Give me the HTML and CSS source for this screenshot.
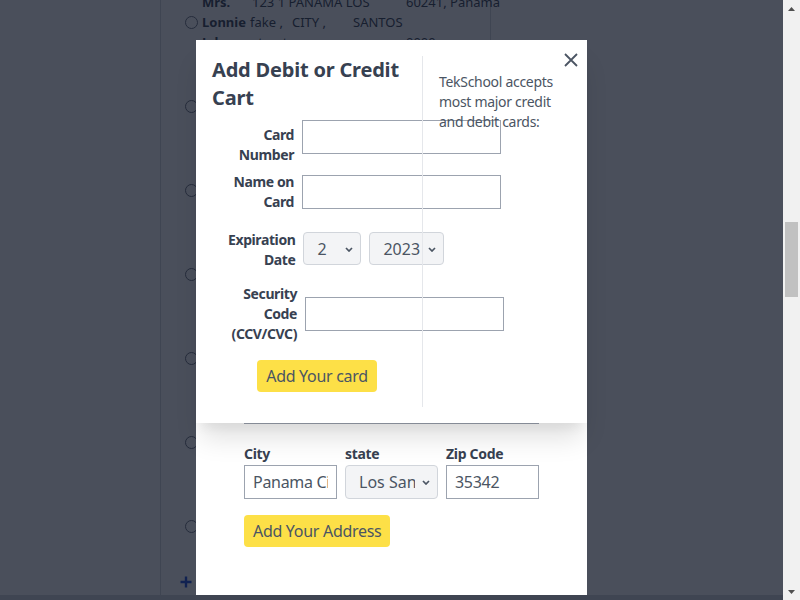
FILE: index.html
```html
<!DOCTYPE html>
<html lang="en">
<head>
<meta charset="utf-8">
<title>Add Debit or Credit Cart</title>
<link rel="stylesheet" href="styles.css">
</head>
<body>
<div class="screen">
  <main class="viewport">
    <div class="page">
      <section class="panel">
        <div class="addr-list">
          <label class="addr">
            <span class="radio"></span>
            <span class="addr-text">
              <span class="addr-line"><b class="a-name">Mrs.</b><span class="a-street">123 1 PANAMA LOS</span><span>60241, Panama</span></span>
              <span class="addr-line"><b class="a-name">Lonnie</b><span class="a-fake">fake ,</span><span class="a-city">CITY ,</span><span>SANTOS</span></span>
              <span class="addr-line"><b class="a-name">Johnson</b><span class="a-street">street</span><span>0000</span></span>
            </span>
          </label>
          <label class="addr">
            <span class="radio"></span>
            <span class="addr-text">
              <span class="addr-line"><b class="a-name">Mr.</b><span class="a-street">45 MAIN STREET</span><span>22031, Panama</span></span>
              <span class="addr-line"><b class="a-name">Mark</b><span class="a-fake">apt ,</span><span class="a-city">CITY ,</span><span>SANTOS</span></span>
              <span class="addr-line"><b class="a-name">Smith</b></span>
            </span>
          </label>
          <label class="addr">
            <span class="radio"></span>
            <span class="addr-text">
              <span class="addr-line"><b class="a-name">Ms.</b><span class="a-street">9 OCEAN AVE</span><span>10023, Panama</span></span>
              <span class="addr-line"><b class="a-name">Sara</b><span class="a-fake">unit ,</span><span class="a-city">CITY ,</span><span>COLON</span></span>
              <span class="addr-line"><b class="a-name">Lee</b></span>
            </span>
          </label>
          <label class="addr">
            <span class="radio"></span>
            <span class="addr-text">
              <span class="addr-line"><b class="a-name">Mr.</b><span class="a-street">77 PARK ROAD</span><span>30012, Panama</span></span>
              <span class="addr-line"><b class="a-name">John</b><span class="a-fake">fake ,</span><span class="a-city">CITY ,</span><span>SANTOS</span></span>
              <span class="addr-line"><b class="a-name">Doe</b></span>
            </span>
          </label>
          <label class="addr">
            <span class="radio"></span>
            <span class="addr-text">
              <span class="addr-line"><b class="a-name">Mrs.</b><span class="a-street">12 HILL STREET</span><span>40110, Panama</span></span>
              <span class="addr-line"><b class="a-name">Anna</b><span class="a-fake">fake ,</span><span class="a-city">CITY ,</span><span>HERRERA</span></span>
              <span class="addr-line"><b class="a-name">Brown</b></span>
            </span>
          </label>
          <label class="addr">
            <span class="radio"></span>
            <span class="addr-text">
              <span class="addr-line"><b class="a-name">Mr.</b><span class="a-street">3 RIVER LANE</span><span>50220, Panama</span></span>
              <span class="addr-line"><b class="a-name">Paul</b><span class="a-fake">fake ,</span><span class="a-city">CITY ,</span><span>SANTOS</span></span>
              <span class="addr-line"><b class="a-name">Green</b></span>
            </span>
          </label>
          <label class="addr">
            <span class="radio"></span>
            <span class="addr-text">
              <span class="addr-line"><b class="a-name">Ms.</b><span class="a-street">8 LAKE DRIVE</span><span>60330, Panama</span></span>
              <span class="addr-line"><b class="a-name">Kim</b><span class="a-fake">fake ,</span><span class="a-city">CITY ,</span><span>SANTOS</span></span>
              <span class="addr-line"><b class="a-name">White</b></span>
            </span>
          </label>
        </div>
        <a class="add-new" href="#">
          <svg class="plus" width="12" height="12" viewBox="0 0 12 12" aria-hidden="true"><path d="M6 0.5V11.5M0.5 6H11.5" stroke="currentColor" stroke-width="2.4" fill="none"/></svg>
          <span>Add a new address</span>
        </a>
      </section>
    </div>
    <div class="page-foot"></div>

    <div class="overlay"></div>

    <div class="modal modal-back">
      <h2 class="back-title">Add an Address</h2>
      <div class="bfield"><span class="blabel">Country</span><input class="binput" value="Panama"></div>
      <div class="bfield"><span class="blabel">Full Name</span><input class="binput" value="Lonnie Johnson"></div>
      <div class="bfield"><span class="blabel">Phone Number</span><input class="binput" value="5555555555"></div>
      <div class="bfield"><span class="blabel">Street Address</span><input class="binput" value="123 1 PANAMA LOS"></div>
      <div class="bgrid">
        <div class="gcell"><span class="blabel">City</span><input class="binput" value="Panama City"></div>
        <div class="gcell"><span class="blabel">state</span>
          <span class="sel-wrap sel-full">
            <select class="sel"><option>Los Santos</option></select>
            <svg class="chev" width="8" height="5" viewBox="0 0 8 5" aria-hidden="true"><path d="M1 1L4 4L7 1" stroke="#4b5563" stroke-width="1.7" fill="none"/></svg>
          </span>
        </div>
        <div class="gcell"><span class="blabel">Zip Code</span><input class="binput" value="35342"></div>
      </div>
      <button class="btn btn-addr" type="button">Add Your Address</button>
    </div>

    <div class="modal modal-front">
      <div class="card-col">
        <h2 class="card-title">Add Debit or Credit Cart</h2>
        <form class="card-form">
          <div class="field field-1"><label class="flabel">Card Number</label><input class="tinput"></div>
          <div class="field field-2"><label class="flabel">Name on Card</label><input class="tinput"></div>
          <div class="field field-3"><label class="flabel">Expiration Date</label>
            <span class="sel-wrap">
              <select class="sel sel-month"><option>2</option></select>
              <svg class="chev" width="8" height="5" viewBox="0 0 8 5" aria-hidden="true"><path d="M1 1L4 4L7 1" stroke="#4b5563" stroke-width="1.7" fill="none"/></svg>
            </span>
            <span class="sel-wrap">
              <select class="sel sel-year"><option>2023</option></select>
              <svg class="chev" width="8" height="5" viewBox="0 0 8 5" aria-hidden="true"><path d="M1 1L4 4L7 1" stroke="#4b5563" stroke-width="1.7" fill="none"/></svg>
            </span>
          </div>
          <div class="field field-4"><label class="flabel">Security Code (CCV/CVC)</label><input class="tinput"></div>
          <button class="btn btn-card" type="button">Add Your card</button>
        </form>
      </div>
      <div class="info-col">
        <p class="info-text">TekSchool accepts most major credit and debit cards:</p>
      </div>
      <button class="close" type="button" aria-label="Close">
        <svg width="14" height="14" viewBox="0 0 14 14" aria-hidden="true"><path d="M1 1L13 13M13 1L1 13" stroke="#4b5563" stroke-width="1.8" fill="none"/></svg>
      </button>
    </div>
  </main>
  <div class="scrollbar">
    <div class="sb-btn"><svg width="7" height="4" viewBox="0 0 7 4" aria-hidden="true"><path d="M0 4L3.5 0L7 4Z" fill="#505050"/></svg></div>
    <div class="sb-track"><div class="sb-thumb"></div></div>
    <div class="sb-btn"><svg width="7" height="4" viewBox="0 0 7 4" aria-hidden="true"><path d="M0 0L7 0L3.5 4Z" fill="#505050"/></svg></div>
  </div>
</div>
</body>
</html>
```

FILE: styles.css
```css
* { box-sizing: border-box; }
html, body { margin: 0; padding: 0; }
body {
  font-family: "Noto Sans", "Open Sans", sans-serif;
  letter-spacing: -0.3px;
  width: 800px;
  height: 600px;
  overflow: hidden;
}
.screen { display: flex; width: 800px; height: 600px; }
.viewport {
  position: relative;
  flex: 0 0 783px;
  width: 783px;
  height: 600px;
  overflow: hidden;
}

/* underlying page */
.page { height: 595px; background: #fff; display: flex; overflow: hidden; }
.panel {
  margin-left: 160px;
  width: 331px;
  border-left: 1px solid #d1d5db;
  border-right: 1px solid #d1d5db;
  padding-left: 24px;
  color: #374151;
  font-size: 13px;
  line-height: 20px;
  letter-spacing: 0;
}
.page-foot { height: 5px; background: #d1d5db; }
.addr-list { display: flex; flex-direction: column; gap: 24px; margin-top: -8px; }
.addr { display: flex; align-items: center; gap: 4px; }
.radio {
  flex: 0 0 13px;
  width: 13px;
  height: 13px;
  border: 1px solid #6b7280;
  border-radius: 50%;
  background: #fff;
}
.addr-text { display: flex; flex-direction: column; }
.addr-line { display: flex; white-space: nowrap; height: 20px; }
.a-name { width: 48px; font-weight: 700; }
.a-street { width: 156px; padding-left: 2px; }
.a-fake { width: 42px; }
.a-city { width: 61px; }
.add-new {
  display: flex;
  align-items: center;
  gap: 6px;
  height: 20px;
  margin: 16px 0 0 -5px;
  color: #1d4ed8;
  font-weight: 600;
  text-decoration: none;
}
.plus { flex: 0 0 12px; }

.overlay { position: absolute; inset: 0; background: rgba(14, 20, 36, 0.75); }

/* modals */
.modal {
  position: absolute;
  left: 196px;
  top: 40px;
  width: 391px;
  background: #fff;
}
.modal-back {
  height: 555px;
  padding: 16px 48px 48px;
  display: flex;
  flex-direction: column;
}
.modal-front {
  display: flex;
  padding: 16px;
  box-shadow: 0 20px 25px -5px rgba(0, 0, 0, 0.12), 0 10px 10px -5px rgba(0, 0, 0, 0.05);
}

.card-col {
  flex: 0 0 210px;
  width: 210px;
  min-width: 0;
  display: flex;
  flex-direction: column;
  padding-bottom: 15px;
}
.card-form { display: flex; flex-direction: column; min-width: 0; }
.card-title {
  margin: 0;
  font-size: 20px;
  line-height: 28px;
  font-weight: 700;
  color: #374151;
  letter-spacing: -0.2px;
}
.field { display: flex; align-items: center; column-gap: 8px; padding-left: 16px; min-width: 0; }
.field-1 { margin-top: 8px; align-items: flex-start; }
.field-1 .flabel { margin-top: 5px; }
.field-2 { margin-top: 7px; }
.field-3 { margin-top: 18px; align-items: flex-start; }
.field-3 .sel-wrap { margin-top: 2px; }
.field-4 { margin-top: 14px; }
.field-4 .flabel { flex-basis: 69px; }
.flabel {
  flex: 0 0 66px;
  text-align: right;
  font-size: 14px;
  line-height: 20px;
  font-weight: 700;
  color: #374151;
  letter-spacing: -0.4px;
}
.tinput {
  flex: 0 0 199px;
  width: 199px;
  height: 34px;
  margin: 0;
  border: 1px solid #9ca3af;
  border-radius: 0;
  background: transparent;
  padding: 0 8px;
  font-family: inherit;
  font-size: 16px;
  color: #4b5563;
}

.sel-wrap { position: relative; display: inline-flex; flex: 0 0 auto; }
.sel {
  -webkit-appearance: none;
  appearance: none;
  height: 33px;
  margin: 0;
  border: 1px solid #d1d5db;
  border-radius: 4px;
  background: #f3f4f6;
  font-family: inherit;
  font-size: 16px;
  color: #4b5563;
  padding: 0 22px 0 13px;
}
.sel-month { width: 58px; }
.sel-year { width: 75px; }
.chev {
  position: absolute;
  right: 8px;
  top: 50%;
  margin-top: -2px;
  pointer-events: none;
}

.btn {
  height: 32px;
  border: 0;
  border-radius: 4px;
  background: #fde047;
  color: #4b5563;
  padding: 0 9px;
  font-family: inherit;
  font-size: 16px;
  line-height: 32px;
  letter-spacing: -0.3px;
}
.btn-card { align-self: center; margin-top: 16px; }
.btn-addr { align-self: flex-start; margin-top: 16px; }

.info-col {
  flex: 1;
  min-width: 0;
  position: relative;
  border-left: 1px solid #e5e7eb;
  padding: 16px 0 0 16px;
}
.info-text { margin: 0; font-size: 14px; line-height: 20px; color: #4b5563; }
.close {
  position: absolute;
  top: 13px;
  right: 9px;
  width: 14px;
  height: 14px;
  padding: 0;
  border: 0;
  background: none;
  display: flex;
}

/* back modal form */
.back-title {
  margin: 0 0 40px;
  font-size: 20px;
  line-height: 28px;
  font-weight: 700;
  color: #374151;
}
.bfield { margin-top: 20px; display: flex; flex-direction: column; }
.blabel {
  display: block;
  font-size: 14px;
  line-height: 20px;
  font-weight: 700;
  color: #374151;
  margin-bottom: 1px;
}
.binput {
  width: 100%;
  height: 34px;
  margin: 0;
  border: 1px solid #9ca3af;
  border-radius: 0;
  padding: 0 8px;
  font-family: inherit;
  font-size: 16px;
  color: #4b5563;
  background: #fff;
  letter-spacing: -0.3px;
}
.bgrid {
  margin-top: 20px;
  display: grid;
  grid-template-columns: repeat(3, 1fr);
  column-gap: 8px;
}
.gcell { min-width: 0; display: flex; flex-direction: column; }
.sel-full { display: flex; }
.sel-full .sel { width: 100%; height: 34px; }

/* scrollbar */
.scrollbar {
  flex: 0 0 17px;
  background: #f1f1f1;
  display: flex;
  flex-direction: column;
}
.sb-btn { height: 17px; flex: 0 0 17px; display: flex; align-items: center; justify-content: center; }
.sb-track { flex: 1; }
.sb-thumb { margin: 205px 2px 0; height: 75px; background: #c1c1c1; }
```
